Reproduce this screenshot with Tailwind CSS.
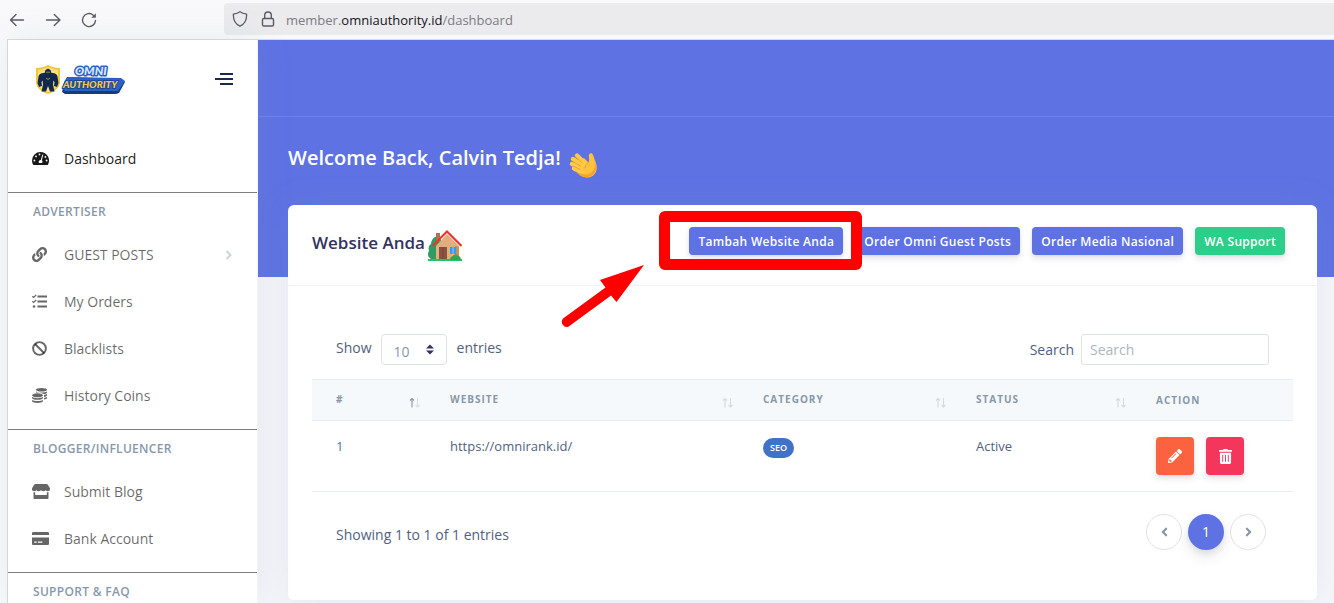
<!DOCTYPE html>
<html lang="id">
<head>
    <meta charset="utf-8">
    <meta name="viewport" content="width=device-width, initial-scale=1">
    <title>Dashboard - Omni Authority</title>
    <script src="https://cdn.jsdelivr.net/npm/@tailwindcss/browser@4"></script>
</head>

<body class="bg-[#f9f9fb] font-['Open_Sans',sans-serif] text-sm text-[#525f7f] h-screen overflow-hidden flex flex-col">

    <!-- Browser toolbar -->
    <div class="h-[39px] shrink-0 flex items-center text-[#5b5b66]">
        <div class="w-[224px] flex items-center gap-5 pl-[9px]">
            <button type="button" aria-label="Back">
                <svg class="w-4 h-4" viewBox="0 0 16 16" fill="none" stroke="currentColor" stroke-width="1.4" stroke-linecap="round" stroke-linejoin="round"><path d="M14.500 8H2M7 2.500L1.500 8 7 13.500"/></svg>
            </button>
            <button type="button" aria-label="Forward">
                <svg class="w-4 h-4" viewBox="0 0 16 16" fill="none" stroke="currentColor" stroke-width="1.4" stroke-linecap="round" stroke-linejoin="round"><path d="M1.500 8h13M9.300 2.500L15 8l-5.700 5.500"/></svg>
            </button>
            <button type="button" aria-label="Reload">
                <svg class="w-4 h-4" viewBox="0 0 16 16" fill="none" stroke="currentColor" stroke-width="1.4" stroke-linecap="round"><path d="M14.500 8.500A6.500 6.500 0 1 1 12.300 3.200"/><path d="M14.800 1.300v4.500h-4.500z" fill="currentColor" stroke="none"/></svg>
            </button>
        </div>
        <div class="flex-1 self-stretch mt-[3px] mb-1 pl-2 flex items-center gap-3 rounded-l bg-[#ebebed]">
            <svg class="w-4 h-4" viewBox="0 0 16 16" fill="none" stroke="currentColor" stroke-width="1.300" stroke-linejoin="round"><path d="M8 .8c1.700 1.300 4 2 6.600 2.300.3 5.400-1.700 9.700-6.600 12.100C3.100 12.800 1.100 8.500 1.400 3.100 4 2.800 6.300 2.100 8 .8z"/></svg>
            <svg class="w-4 h-4" viewBox="0 0 16 16" fill="none" stroke="currentColor" stroke-width="1.400"><rect x="2.500" y="7.500" width="11" height="7.500" rx="1.300"/><path d="M4.700 7.500V4.300a3.300 3.300 0 0 1 6.600 0v3.200"/></svg>
            <span class="-ml-[2px] pt-[2px] text-[13px] text-[#7c7c82]">member.<span class="text-[#15141a]">omniauthority.id</span>/dashboard</span>
        </div>
    </div>

    <div class="flex flex-1 min-h-0 ml-[7px] border-t border-l border-[#dadadc]">

        <!-- Sidebar -->
        <aside class="relative z-10 w-[250px] shrink-0 bg-white border-r border-[#f3f4f8] shadow-[0_0_32px_rgba(136,152,170,0.15)] text-black/60">
            <div class="h-[78px] pl-[27px] pr-6 flex items-center justify-between">
                <a href="#" aria-label="Omni Authority">
                    <svg class="w-[92px] h-8" viewBox="0 0 92 32">
                        <path d="M13 2c3.500 2 7.500 3 12 3v14c0 6-6 10-12 12C7 29 1 25 1 19V5c4.500 0 8.500-1 12-3z" fill="#f3c53c"/>
                        <path d="M13 4c3 1.700 6.500 2.500 10 2.700V19c0 5-5 8.500-10 10.200C8 27.500 3 24 3 19V6.700C6.500 6.500 10 5.700 13 4z" fill="#f9e27c"/>
                        <path d="M10.500 7l2.500-1.500L15.500 7l1 3c3-.5 5.500 1 6 3.500l1 6.500-1.500 4-3-1 .5-4-1-1.500-.5 4 1.500 7h-4.500L13 23l-2 5.500H6.500l1.500-7-.5-4L6.500 19l.5 4-3 1-1.500-4 1-6.500c.5-2.500 3-4 6-3.500z" fill="#12284f"/>
                        <path d="M11.200 9.200h3.600M11 15l2 1.500 2-1.500" fill="none" stroke="#8a955f" stroke-width="1"/>
                        <path d="M29 20l4-6 53 2 4 3-6 11-3 1H30l-3-2z" fill="#173a80"/>
                        <path d="M29 19l3-5 54 1 4 3-7 10H30l-2-2z" fill="#2a62c4"/>
                        <g font-family="Lato, sans-serif" font-weight="900" font-style="italic" stroke-linejoin="round" paint-order="stroke">
                            <text x="40" y="12" font-size="12" fill="#dce9fa" stroke="#2a62c4" stroke-width="3">OMNI</text>
                            <text x="28" y="25" font-size="10" fill="#fbc64b" stroke="#1c4693" stroke-width="2">AUTHORITY</text>
                        </g>
                    </svg>
                </a>
                <button type="button" aria-label="Toggle menu" class="w-[18px] flex flex-col items-end gap-[3px]">
                    <span class="w-[13px] h-[2px] bg-[#172b4d]"></span>
                    <span class="w-[18px] h-[2px] bg-[#172b4d]"></span>
                    <span class="w-[13px] h-[2px] bg-[#172b4d]"></span>
                </button>
            </div>

            <nav>
                <div class="pt-[17px] pb-[10px] border-b border-[#808080]">
                    <a href="#" class="h-[47px] pl-6 flex items-center text-black/90">
                        <svg class="w-[17px] h-[15px] mr-[15px]" viewBox="0 0 17 15"><path d="M8.500 1A8.500 8.500 0 0 0 0 9.500c0 1.600.4 3 1.100 4.200.2.200.4.300.6.300h13.600c.3 0 .5-.1.600-.300A8.500 8.500 0 0 0 8.500 1z" fill="currentColor"/><g fill="#fff"><circle cx="7.500" cy="3.400" r=".9"/><circle cx="4" cy="5.400" r=".9"/><circle cx="2.400" cy="9.500" r=".9"/><circle cx="14.600" cy="9.500" r=".9"/><circle cx="13.400" cy="5.900" r=".9"/><path d="M10.400 3.500l.9.300-1.500 5.400a2 2 0 0 1 .2 2.800H7a2 2 0 0 1 1.800-3.100z"/></g></svg>
                        Dashboard
                    </a>
                </div>

                <div class="pb-[10px] border-b border-[#808080]">
                    <h6 class="h-[38px] pl-[25px] flex items-center text-xs font-semibold tracking-wide text-[#8898aa]">ADVERTISER</h6>
                    <a href="#" class="h-[47px] pl-6 pr-6 flex items-center">
                        <svg class="w-[15px] h-[15px] mr-[17px]" viewBox="0 0 512 512" fill="currentColor"><path d="M326.612 185.391c59.747 59.809 58.927 155.698.36 214.590-.11.12-.24.25-.36.37l-67.200 67.200c-59.270 59.270-155.699 59.262-214.960 0-59.270-59.260-59.270-155.700 0-214.960l37.106-37.106c9.840-9.840 26.786-3.300 27.294 10.606.648 17.722 3.826 35.527 9.690 52.721 1.986 5.822.567 12.262-3.783 16.612l-13.087 13.087c-28.026 28.026-28.905 73.660-1.155 101.960 28.024 28.579 74.086 28.749 102.325.510l67.200-67.190c28.191-28.191 28.073-73.757 0-101.830-3.701-3.694-7.429-6.564-10.341-8.569a16.037 16.037 0 0 1-6.947-12.606c-.396-10.567 3.348-21.456 11.698-29.806l21.054-21.055c5.521-5.521 14.182-6.199 20.584-1.731a152.482 152.482 0 0 1 20.522 17.197zM467.547 44.449c-59.261-59.262-155.690-59.270-214.960 0l-67.200 67.200c-.12.12-.25.25-.36.37-58.566 58.892-59.387 154.781.36 214.590a152.454 152.454 0 0 0 20.521 17.196c6.402 4.468 15.064 3.789 20.584-1.731l21.054-21.055c8.350-8.350 12.094-19.239 11.698-29.806a16.037 16.037 0 0 0-6.947-12.606c-2.912-2.005-6.640-4.875-10.341-8.569-28.073-28.073-28.191-73.639 0-101.830l67.200-67.190c28.239-28.239 74.300-28.069 102.325.510 27.750 28.300 26.872 73.934-1.155 101.960l-13.087 13.087c-4.350 4.350-5.769 10.790-3.783 16.612 5.864 17.194 9.042 34.999 9.690 52.721.509 13.906 17.454 20.446 27.294 10.606l37.106-37.106c59.271-59.259 59.271-155.699.001-214.959z"/></svg>
                        GUEST POSTS
                        <svg class="w-2 h-3 ml-auto text-[#ced4da]" viewBox="0 0 8 12" fill="none" stroke="currentColor" stroke-width="2"><path d="M1.500 2l4 4-4 4"/></svg>
                    </a>
                    <a href="#" class="h-[47px] pl-6 flex items-center">
                        <svg class="w-[15px] h-[15px] mr-[17px]" viewBox="0 0 15 15" fill="currentColor"><path d="M5.500 1.500h9.500v2H5.500zM5.500 6.500h9.500v2H5.500zM5.500 11.500h9.500v2H5.500z"/><circle cx="2" cy="12.500" r="1.300"/><path d="M.3 2.200l1.300 1.200L4.200 1M.3 7.200l1.300 1.200L4.200 6" fill="none" stroke="currentColor" stroke-width="1.200"/></svg>
                        My Orders
                    </a>
                    <a href="#" class="h-[47px] pl-6 flex items-center">
                        <svg class="w-[15px] h-[15px] mr-[17px]" viewBox="0 0 15 15" fill="none" stroke="currentColor" stroke-width="1.900"><circle cx="7.500" cy="7.500" r="6.400"/><path d="M3 3l9 9"/></svg>
                        Blacklists
                    </a>
                    <a href="#" class="h-[47px] pl-6 flex items-center">
                        <svg class="w-[15px] h-[15px] mr-[17px]" viewBox="0 0 15 15" fill="currentColor"><ellipse cx="9.500" cy="1.800" rx="5.500" ry="1.800"/><path d="M4 3.400c2 1.500 9 1.500 11 0v1.300c-.5.8-1.800 1.300-3.500 1.400C10.200 5 7.500 4.300 4 4.500zM12 7.100c1.300-.2 2.300-.5 3-1v1.400c-.5.7-1.500 1.200-3 1.400zM12 9.900c1.300-.2 2.300-.5 3-1v1.400c-.5.7-1.500 1.100-3 1.300z"/><ellipse cx="5.500" cy="7.300" rx="5.500" ry="2"/><path d="M0 9c2 1.500 9 1.500 11 0v1.300c-1.500 2-9.500 2-11 0zM0 11.900c2 1.500 9 1.500 11 0v1.400c-1.500 2.100-9.500 2.100-11 0z"/></svg>
                        History Coins
                    </a>
                </div>

                <div class="pb-[10px] border-b border-[#808080]">
                    <h6 class="h-[38px] pl-[25px] flex items-center text-xs font-semibold tracking-wide text-[#8898aa]">BLOGGER/INFLUENCER</h6>
                    <a href="#" class="h-[47px] pl-6 flex items-center">
                        <svg class="w-[18px] h-[15px] mr-[14px]" viewBox="0 0 18 15" fill="currentColor"><path d="M3.200 0h11.600c.4 0 .7.2.9.5l2 3.300c.9 1.500 0 3.400-1.700 3.400-1 0-1.800-.4-2.300-1-1 1.300-3.500 1.300-4.700 0-1.200 1.300-3.700 1.300-4.700 0-.5.6-1.300 1-2.300 1C.3 7.200-.6 5.300.3 3.800l2-3.300c.2-.3.5-.5.9-.5z"/><path d="M1.500 8.200h1.700V11h11.600V8.200h1.700V14c0 .6-.4 1-1 1h-13c-.6 0-1-.4-1-1z"/></svg>
                        Submit Blog
                    </a>
                    <a href="#" class="h-[47px] pl-6 flex items-center">
                        <svg class="w-[17px] h-[15px] mr-[15px]" viewBox="0 0 17 15"><path d="M0 4V2.300C0 1.500.6 1 1.400 1h14.200c.8 0 1.400.5 1.400 1.300V4zM0 6.500h17v6.200c0 .8-.6 1.300-1.400 1.300H1.400C.6 14 0 13.500 0 12.700z" fill="currentColor"/><path d="M2.200 10.500h2.400v1.300H2.200zM5.800 10.500h4.600v1.300H5.800z" fill="#fff"/></svg>
                        Bank Account
                    </a>
                </div>

                <h6 class="h-[38px] pl-[25px] flex items-center text-xs font-semibold tracking-wide text-[#8898aa]">SUPPORT &amp; FAQ</h6>
            </nav>
        </aside>

        <!-- Main content -->
        <main class="flex-1 min-w-0 bg-[#f5f6fb]">
            <header class="h-[237px] bg-[#5e72e4] text-white">
                <div class="h-[77px] border-b border-white/10"></div>
                <h1 class="h-[82px] pl-[30px] flex items-center gap-2 text-xl font-semibold">
                    Welcome Back, Calvin Tedja!
                    <svg class="w-[30px] h-[30px] mt-3" viewBox="0 0 30 30">
                        <path d="M9 12l6-3 4.500 4.500c.8-2 .6-4 .3-6.500-.3-2.800 3.300-3.800 4.300-1 .8 2.500 1.500 4.500 2.600 7.500 2 5.500 1 10-2.200 12.700-3.500 3-9 3-13 .3L5 21z" fill="#ffc23c"/>
                        <g fill="none" stroke="#ffc94a" stroke-linecap="round" stroke-width="4.400"><path d="M16 14.500L8 6.500M13 16L4 10M12 19L3 15M13 23L5 19.500"/></g>
                        <path d="M6 21.500c5 4 12 6 17 1.500 3-3 3.600-6 3.500-9.500 2 6-.1 11-3.800 13.300-3.700 2.200-8.700 1.700-12-.5z" fill="#f8a233"/>
                        <path d="M13 13.500L6.300 7.800M11.500 17L4 12.600M11 20.500l-6.500-3.300M19.500 13.500c-2.500 1-3.500 3-3.300 5.500" fill="none" stroke="#ef9a2e" stroke-width=".9" stroke-linecap="round"/>
                    </svg>
                </h1>
            </header>

            <section class="-mt-[72px] ml-[30px] mr-[17px] bg-white rounded-md shadow-[0_0_32px_rgba(136,152,170,0.15)]">
                <div class="h-[81px] pl-6 pr-8 pb-1 flex items-center justify-between border-b border-black/5">
                    <h3 class="flex items-center gap-[2px] text-[17px] font-semibold text-[#32325d]">
                        Website Anda
                        <svg class="w-9 h-9 mt-2" viewBox="0 0 36 36">
                            <path d="M8 8c3-2 6 0 6 4v18H4c-3-2-4-5-2-8-1-3 0-6 2-7 0-3 2-6 4-7z" fill="#2f9c63"/>
                            <path d="M9 4h4v9H9z" fill="#a97454"/>
                            <path d="M9 17L20 5l12 12v15H9z" fill="#e3ae7d"/>
                            <path d="M28 17l4 1v14h-4z" fill="#c98f63"/>
                            <path d="M5.500 17L20 2.500 34.500 17" fill="none" stroke="#e5392f" stroke-width="2.200"/>
                            <path d="M12 18h8v13h-8z" fill="#8a5242"/><path d="M16 18v13" stroke="#6f3e34" stroke-width=".7"/>
                            <path d="M23 18h6v7h-6z" fill="#2f9df0"/><path d="M26 18v7" stroke="#b7dffa" stroke-width=".7"/>
                            <path d="M1 30h34v2H1z" fill="#22c463"/>
                            <path d="M23 31c0-3 2-4 3-4 1-2 4-2 5 0 2 0 3 2 3 4z" fill="#35a552"/>
                        </svg>
                    </h3>
                    <div class="-mt-1 flex items-center gap-3 text-xs font-semibold tracking-wide text-white">
                        <div class="relative z-10">
                            <button type="button" class="block h-7 px-[9px] pt-[2px] rounded bg-[#5e72e4] shadow-[0_4px_6px_rgba(50,50,93,0.11),0_1px_3px_rgba(0,0,0,0.08)]">Tambah Website Anda</button>
                            <!-- Highlight frame and pointer for the tutorial step -->
                            <div class="absolute -left-[30px] -right-[19px] -top-4 -bottom-[15px] border-[11px] border-[#fe0000] rounded-md pointer-events-none"></div>
                            <svg class="absolute -left-[129px] top-[37px] w-[86px] h-[66px] max-w-none pointer-events-none" viewBox="0 0 86 66"><path d="M84 1L40 16l5.500 7.500L3 54.500a5.300 5.300 0 0 0 5 8.500L51 31.500l5.500 6.500z" fill="#fe0000"/></svg>
                        </div>
                        <button type="button" class="h-7 px-[9px] pt-[2px] rounded bg-[#5e72e4] shadow-[0_4px_6px_rgba(50,50,93,0.11),0_1px_3px_rgba(0,0,0,0.08)]">Order Omni Guest Posts</button>
                        <button type="button" class="h-7 px-[9px] pt-[2px] rounded bg-[#5e72e4] shadow-[0_4px_6px_rgba(50,50,93,0.11),0_1px_3px_rgba(0,0,0,0.08)]">Order Media Nasional</button>
                        <button type="button" class="h-7 px-[9px] pt-[2px] rounded bg-[#2dce89] shadow-[0_4px_6px_rgba(50,50,93,0.11),0_1px_3px_rgba(0,0,0,0.08)]">WA Support</button>
                    </div>
                </div>

                <div class="px-6 pt-12 pb-[50px]">
                    <div class="px-6 pb-[14px] flex items-center justify-between">
                        <div class="flex items-center">
                            <label for="length" class="pb-1">Show</label>
                            <div class="relative ml-[9px] mr-[10px]">
                                <select id="length" class="block appearance-none w-[66px] h-[31px] pl-3 pt-1 rounded border border-[#dee2e6] bg-white text-[#8898aa]">
                                    <option>10</option>
                                    <option>25</option>
                                    <option>50</option>
                                </select>
                                <svg class="absolute right-3 top-[10px] w-[10px] h-[11px] pointer-events-none" viewBox="0 0 10 11" fill="#32325d"><path d="M5 .5l4 4H1zM5 10.500l-4-4h8z"/></svg>
                            </div>
                            <label for="length" class="pb-1">entries</label>
                        </div>
                        <div class="flex items-center gap-[7px]">
                            <label for="search">Search</label>
                            <input id="search" type="search" placeholder="Search" class="w-[188px] h-[31px] px-2 rounded-[3px] border border-[#dee2e6] bg-white placeholder:text-[#adb5bd]">
                        </div>
                    </div>

                    <table class="w-full table-fixed text-left">
                        <colgroup>
                            <col class="w-[114px]">
                            <col>
                            <col class="w-[213px]">
                            <col class="w-[180px]">
                            <col class="w-[161px]">
                        </colgroup>
                        <thead>
                            <tr class="h-[41px] bg-[#f6f9fc] border-y border-[#e9ecef] text-[10px] tracking-[1px] text-[#8898aa]">
                                <th class="pl-6 pr-[6px] font-bold">
                                    <div class="flex justify-between">#
                                        <svg class="w-[11px] h-[11px] mt-[5px]" viewBox="0 0 11 11" fill="none" stroke-width="1.100"><path d="M3 10.500V1.500M1 3.500l2-2 2 2" stroke="#8898aa"/><path d="M8.500 1v9M6.500 8l2 2 2-2" stroke="#d9dfe6"/></svg>
                                    </div>
                                </th>
                                <th class="pl-6 pr-[6px] font-bold">
                                    <div class="flex justify-between">WEBSITE
                                        <svg class="w-[11px] h-[11px] mt-[5px]" viewBox="0 0 11 11" fill="none" stroke="#d3d9e1" stroke-width="1.100"><path d="M3 10.500V1.500M1 3.500l2-2 2 2M8.500 1v9M6.500 8l2 2 2-2"/></svg>
                                    </div>
                                </th>
                                <th class="pl-6 pr-[6px] font-bold">
                                    <div class="flex justify-between">CATEGORY
                                        <svg class="w-[11px] h-[11px] mt-[5px]" viewBox="0 0 11 11" fill="none" stroke="#d3d9e1" stroke-width="1.100"><path d="M3 10.500V1.500M1 3.500l2-2 2 2M8.500 1v9M6.500 8l2 2 2-2"/></svg>
                                    </div>
                                </th>
                                <th class="pl-6 pr-[6px] font-bold">
                                    <div class="flex justify-between">STATUS
                                        <svg class="w-[11px] h-[11px] mt-[5px]" viewBox="0 0 11 11" fill="none" stroke="#d3d9e1" stroke-width="1.100"><path d="M3 10.500V1.500M1 3.500l2-2 2 2M8.500 1v9M6.500 8l2 2 2-2"/></svg>
                                    </div>
                                </th>
                                <th class="pl-6 font-bold">ACTION</th>
                            </tr>
                        </thead>
                        <tbody>
                            <tr class="border-b border-[#e9ecef] text-[13px] align-top">
                                <td class="pl-6 py-4 text-[#4a7ba6]">1</td>
                                <td class="pl-6 py-4">https://omnirank.id/</td>
                                <td class="pl-6 py-4"><span class="inline-block h-5 px-[7px] rounded-full bg-[#4072c8] text-[9px] leading-5 font-semibold text-white">SEO</span></td>
                                <td class="pl-6 py-4">Active</td>
                                <td class="pl-6 py-4">
                                    <div class="flex gap-3 text-white">
                                        <button type="button" aria-label="Edit" class="w-[38px] h-[38px] flex items-center justify-center rounded bg-[#fb6340] shadow-[0_4px_6px_rgba(50,50,93,0.11),0_1px_3px_rgba(0,0,0,0.08)]">
                                            <svg class="w-[14px] h-[14px]" viewBox="0 0 512 512" fill="currentColor"><path d="M497.900 142.100l-46.100 46.100c-4.700 4.700-12.300 4.700-17 0l-111-111c-4.700-4.700-4.700-12.300 0-17l46.100-46.100c18.700-18.700 49.100-18.700 67.900 0l60.100 60.100c18.800 18.700 18.800 49.100 0 67.900zM284.200 99.800L21.600 362.400.4 483.900c-2.900 16.400 11.400 30.600 27.800 27.800l121.500-21.300 262.600-262.600c4.700-4.700 4.700-12.300 0-17l-111-111c-4.800-4.700-12.400-4.700-17.100 0zM124.100 339.900c-5.500-5.500-5.500-14.300 0-19.800l154-154c5.500-5.500 14.300-5.500 19.800 0s5.500 14.300 0 19.800l-154 154c-5.500 5.500-14.300 5.500-19.800 0zM88 424h48v36.300l-64.500 11.300-31.100-31.100L51.700 376H88v48z"/></svg>
                                        </button>
                                        <button type="button" aria-label="Delete" class="w-[38px] h-[38px] flex items-center justify-center rounded bg-[#f5365c] shadow-[0_4px_6px_rgba(50,50,93,0.11),0_1px_3px_rgba(0,0,0,0.08)]">
                                            <svg class="w-[13px] h-[15px]" viewBox="0 0 448 512" fill="currentColor"><path d="M32 464a48 48 0 0 0 48 48h288a48 48 0 0 0 48-48V128H32zm272-256a16 16 0 0 1 32 0v224a16 16 0 0 1-32 0zm-96 0a16 16 0 0 1 32 0v224a16 16 0 0 1-32 0zm-96 0a16 16 0 0 1 32 0v224a16 16 0 0 1-32 0zM432 32H312l-9.400-18.700A24 24 0 0 0 281.100 0H166.800a23.720 23.720 0 0 0-21.400 13.300L136 32H16A16 16 0 0 0 0 48v32a16 16 0 0 0 16 16h416a16 16 0 0 0 16-16V48a16 16 0 0 0-16-16z"/></svg>
                                        </button>
                                    </div>
                                </td>
                            </tr>
                        </tbody>
                    </table>

                    <div class="pl-6 pr-[27px] pt-[22px] flex items-center justify-between">
                        <p class="pt-[6px]">Showing 1 to 1 of 1 entries</p>
                        <div class="flex gap-[6px] text-[#8898aa]">
                            <a href="#" aria-label="Previous" class="w-9 h-9 flex items-center justify-center rounded-full border border-[#dee2e6]">
                                <svg class="w-[7px] h-[14px]" viewBox="0 0 256 512" fill="currentColor"><path d="M31.700 239l136-136c9.400-9.400 24.600-9.400 33.900 0l22.600 22.600c9.400 9.400 9.400 24.600 0 33.900L127.900 256l96.400 96.400c9.400 9.400 9.400 24.600 0 33.900L201.700 409c-9.400 9.400-24.600 9.400-33.900 0l-136-136c-9.500-9.400-9.500-24.600-.1-34z"/></svg>
                            </a>
                            <a href="#" class="w-9 h-9 flex items-center justify-center rounded-full bg-[#5e72e4] text-white shadow-[0_7px_14px_rgba(50,50,93,0.10),0_3px_6px_rgba(0,0,0,0.08)]">1</a>
                            <a href="#" aria-label="Next" class="w-9 h-9 flex items-center justify-center rounded-full border border-[#dee2e6]">
                                <svg class="w-[7px] h-[14px]" viewBox="0 0 256 512" fill="currentColor"><path d="M224.300 273l-136 136c-9.400 9.400-24.600 9.400-33.900 0l-22.600-22.600c-9.400-9.400-9.400-24.600 0-33.900l96.400-96.400-96.400-96.400c-9.400-9.400-9.400-24.600 0-33.900L54.300 103c9.400-9.400 24.600-9.400 33.900 0l136 136c9.500 9.400 9.500 24.600.1 34z"/></svg>
                            </a>
                        </div>
                    </div>
                </div>
            </section>
        </main>
    </div>
</body>
</html>
